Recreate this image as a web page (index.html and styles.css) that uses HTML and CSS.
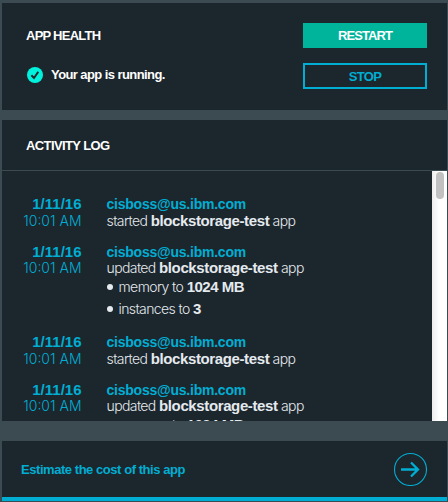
FILE: index.html
```html
<!DOCTYPE html>
<html lang="en">
<head>
<meta charset="utf-8">
<title>App Health</title>
<link rel="stylesheet" href="styles.css">
</head>
<body>
<section class="panel health">
  <div class="status">
    <h2>APP HEALTH</h2>
    <div class="running">
      <svg width="16" height="16" viewBox="0 0 16 16"><circle cx="8" cy="8" r="8" fill="#00f2dc"/><path d="M4.4 8.2l2.6 2.8 4.3-6.2" fill="none" stroke="#1c262d" stroke-width="2"/></svg>
      <span>Your app is running.</span>
    </div>
  </div>
  <div class="actions">
    <button class="restart">RESTART</button>
    <button class="stop">STOP</button>
  </div>
</section>
<section class="panel activity">
  <header><h2>ACTIVITY LOG</h2></header>
  <div class="viewport">
    <div class="log">
      <article class="entry">
        <div class="time"><b>1/11/16</b><span>10:01 AM</span></div>
        <div class="event"><b class="user">cisboss@us.ibm.com</b><p>started <b>blockstorage-test</b> app</p></div>
      </article>
      <article class="entry updated">
        <div class="time"><b>1/11/16</b><span>10:01 AM</span></div>
        <div class="event"><b class="user">cisboss@us.ibm.com</b><p>updated <b>blockstorage-test</b> app</p>
          <ul><li><span>memory to <b>1024 MB</b></span></li><li><span>instances to <b>3</b></span></li></ul></div>
      </article>
      <article class="entry">
        <div class="time"><b>1/11/16</b><span>10:01 AM</span></div>
        <div class="event"><b class="user">cisboss@us.ibm.com</b><p>started <b>blockstorage-test</b> app</p></div>
      </article>
      <article class="entry updated">
        <div class="time"><b>1/11/16</b><span>10:01 AM</span></div>
        <div class="event"><b class="user">cisboss@us.ibm.com</b><p>updated <b>blockstorage-test</b> app</p>
          <ul><li><span>memory to <b>1024 MB</b></span></li></ul></div>
      </article>
    </div>
    <div class="track"><div class="thumb"></div></div>
  </div>
</section>
<section class="panel estimate">
  <span>Estimate the cost of this app</span>
  <svg width="34" height="34" viewBox="0 0 34 34" fill="none" stroke="#00aed3"><circle cx="17.5" cy="17.5" r="16" stroke-width="1.1"/><path d="M8 17.5H25M18 10.5l7 7-7 7" stroke-width="2.3"/></svg>
</section>
</body>
</html>
```
FILE: styles.css
```css
* { box-sizing: border-box; }
body {
  margin: 0;
  padding: 3px 1px 0 2px;
  height: 502px;
  overflow: hidden;
  background: #3c4b52;
  color: #fff;
  font-family: "Liberation Sans", Arial, sans-serif;
}
h2, p, ul { margin: 0; padding: 0; }
.panel { background: #1c262d; }
h2 { font-size: 13px; line-height: 16px; letter-spacing: -0.75px; }
.health {
  height: 107px;
  margin-bottom: 10px;
  padding: 20px 20px 0 24px;
  display: flex;
  justify-content: space-between;
}
.status { padding-top: 5px; }
.running {
  display: flex;
  align-items: center;
  gap: 8px;
  margin-top: 22px;
  margin-left: 1px;
  font-size: 13px;
  font-weight: 700;
  line-height: 16px;
  letter-spacing: -0.58px;
}
.running span { padding-top: 1px; }
.actions { display: flex; flex-direction: column; gap: 15px; width: 124px; }
button {
  height: 25px;
  padding: 0;
  border: 0;
  font: 700 13px/25px "Liberation Sans", Arial, sans-serif;
  letter-spacing: -0.9px;
}
.restart { background: #00b39b; color: #fff; }
.stop {
  height: 26px;
  line-height: 24px;
  background: transparent;
  border: 2px solid #00aed3;
  color: #00aed3;
  letter-spacing: -0.7px;
}
.activity { height: 301px; margin-bottom: 20px; }
.activity h2 { letter-spacing: -0.6px; }
.activity header {
  height: 51px;
  padding: 18px 24px 0;
  border-bottom: 1px solid #3c4b52;
}
.viewport { display: flex; height: 250px; overflow: hidden; }
.log { flex: 1; padding-top: 25px; }
.entry {
  display: flex;
  gap: 25px;
  margin-bottom: 15px;
  font-size: 15px;
  line-height: 16.5px;
}
.time { width: 79.5px; text-align: right; color: #00aed3; }
.time b, .time span, .user { display: block; }
.time b { letter-spacing: 0; }
.time span, .event p, .event li {
  font-family: Inter, "Liberation Sans", sans-serif;
  font-size: 14px;
  font-weight: 300;
  letter-spacing: -0.6px;
  white-space: nowrap;
}
.time span { letter-spacing: 0; }
.updated p, .updated .time span { margin-top: -1px; }
.event { color: #e4eaee; }
.event b { font: 700 15px/16px "Liberation Sans", Arial, sans-serif; letter-spacing: -0.38px; }
.event .user { color: #00aed3; font-size: 14px; line-height: 16.5px; letter-spacing: -0.23px; }
ul { list-style: none; }
li { display: flex; align-items: center; height: 22px; }
li::before {
  content: "";
  width: 6px;
  height: 6px;
  margin-right: 6px;
  border-radius: 50%;
  background: #e4eaee;
}
.event ul { margin-bottom: -1px; }
.event li b { letter-spacing: -0.5px; }
.track { width: 15px; padding: 1px 3px 0 4px; background: linear-gradient(90deg, #ededed, #fff 7px); }
.thumb { width: 8px; height: 27px; border-radius: 4px; background: #c1c1c1; }
.estimate {
  height: 60px;
  padding: 0 20px 0 19px;
  border-bottom: 4px solid #00aed3;
  display: flex;
  justify-content: space-between;
  align-items: center;
  color: #00aed3;
  font-size: 13px;
  font-weight: 700;
  letter-spacing: -0.45px;
}
```
